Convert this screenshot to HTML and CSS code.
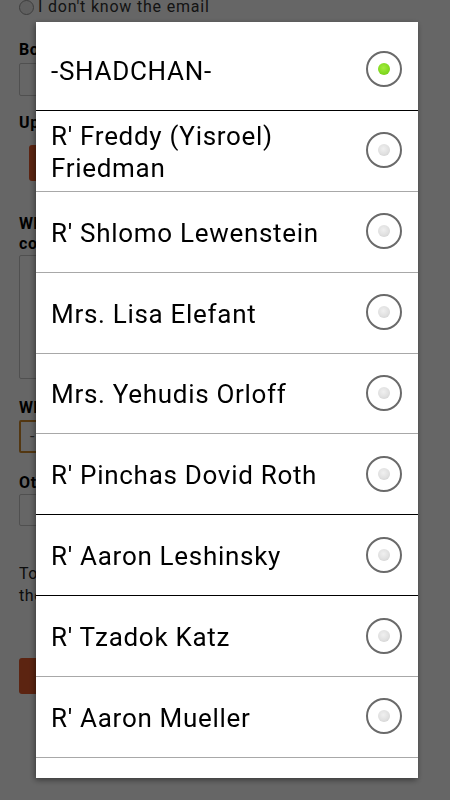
FILE: index.html
```html
<!DOCTYPE html>
<html lang="en">
<head>
<meta charset="utf-8">
<title>Choose shadchan</title>
<link rel="stylesheet" href="styles.css">
</head>
<body>
<div class="page">
  <div class="email-opt"><span class="small-radio"></span><span>I don't know the email</span></div>
  <div class="label lb-boy">Boy's name</div>
  <div class="input in-boy"></div>
  <div class="label lb-up">Upload resume</div>
  <div class="btn btn-up">Choose file</div>
  <div class="label lb-what">What would you like to tell the shadchan about<br>connection</div>
  <div class="textarea"></div>
  <div class="label lb-which">Which shadchan?</div>
  <div class="select">-</div>
  <div class="label lb-other">Other shadchan</div>
  <div class="input in-other"></div>
  <p class="note">To submit this suggestion, tap the button below and<br>the shadchan will be notified.</p>
  <div class="btn btn-submit">Submit</div>
</div>

<div class="overlay"></div>

<div class="dialog">
  <div class="list">
    <div class="row"><span class="name">-SHADCHAN-</span><span class="radio on"><i></i></span></div>
    <div class="row soft"><span class="name">R' Freddy (Yisroel) Friedman</span><span class="radio"><i></i></span></div>
    <div class="row soft"><span class="name">R' Shlomo Lewenstein</span><span class="radio"><i></i></span></div>
    <div class="row soft"><span class="name">Mrs. Lisa Elefant</span><span class="radio"><i></i></span></div>
    <div class="row soft"><span class="name">Mrs. Yehudis Orloff</span><span class="radio"><i></i></span></div>
    <div class="row"><span class="name">R' Pinchas Dovid Roth</span><span class="radio"><i></i></span></div>
    <div class="row"><span class="name">R' Aaron Leshinsky</span><span class="radio"><i></i></span></div>
    <div class="row soft"><span class="name">R' Tzadok Katz</span><span class="radio"><i></i></span></div>
    <div class="row soft"><span class="name">R' Aaron Mueller</span><span class="radio"><i></i></span></div>
    <div class="row soft"><span class="name">R' Other</span><span class="radio"><i></i></span></div>
  </div>
</div>
</body>
</html>
```

FILE: styles.css
```css
html, body {
  margin: 0;
  padding: 0;
  height: 100%;
  overflow: hidden;
  background: #fff;
}

body {
  font-family: Roboto, "Liberation Sans", Arial, sans-serif;
  color: #000;
}

.page {
  padding: 0 19px;
}

.email-opt {
  display: flex;
  align-items: center;
  gap: 4px;
  height: 14px;
  font-size: 16px;
  letter-spacing: 0.8px;
  line-height: 14px;
  color: #333;
  white-space: nowrap;
}

.small-radio {
  width: 13px;
  height: 13px;
  border: 1px solid #999;
  border-radius: 50%;
  background: #eee;
  flex: none;
}

.label {
  font-size: 16px;
  line-height: 20px;
  font-weight: 700;
  letter-spacing: 0.6px;
  white-space: nowrap;
}

.lb-boy { margin-top: 26px; }
.lb-up { margin-top: 17px; }
.lb-what { margin-top: 33px; }
.lb-which { margin-top: 19px; }
.lb-other { margin-top: 20px; }

.input, .textarea, .select {
  box-sizing: border-box;
  border: 1px solid #c8c8c8;
  border-radius: 2px;
  background: #fff;
  width: 370px;
}

.in-boy { margin-top: 3px; height: 33px; }
.in-other { margin-top: 1px; height: 32px; }

.textarea {
  margin-top: 1px;
  height: 124px;
}

.select {
  margin-top: 2px;
  height: 33px;
  border: 2px solid #d08a2c;
  padding-left: 9px;
  font-size: 16px;
  line-height: 29px;
  color: #555;
}

.btn {
  height: 36px;
  width: 140px;
  border-radius: 3px;
  background: #e55a2b;
  color: #fff;
  font-size: 16px;
  line-height: 36px;
  text-align: center;
}

.btn-up {
  margin-top: 12px;
  margin-left: 10px;
}

.note {
  margin: 37px 0 0;
  font-size: 16px;
  line-height: 22px;
  letter-spacing: 0.6px;
  color: #222;
  white-space: nowrap;
}

.btn-submit {
  margin-top: 51px;
  width: 200px;
}

.overlay {
  position: fixed;
  inset: 0;
  background: rgba(0, 0, 0, 0.6);
}

.dialog {
  position: fixed;
  left: 36px;
  top: 22px;
  width: 382px;
  height: 756px;
  box-sizing: border-box;
  padding-top: 8px;
  background: #fff;
  overflow: hidden;
  box-shadow: -1px 2px 6px rgba(0, 0, 0, 0.45);
}

.list {
  display: flex;
  flex-direction: column;
}

.row {
  display: flex;
  align-items: center;
  justify-content: space-between;
  gap: 12px;
  box-sizing: border-box;
  height: 80.875px;
  flex: none;
  padding: 2px 16px 0 15px;
  border-bottom: 1px solid #000;
}

.row.soft {
  border-bottom-color: #a8a8a8;
}

.name {
  font-size: 26px;
  letter-spacing: 0.7px;
  line-height: 32px;
  color: #000;
}

.radio {
  flex: none;
  width: 36px;
  height: 36px;
  margin-top: -3px;
  box-sizing: border-box;
  border: 2px solid #6a6a6a;
  border-radius: 50%;
  display: flex;
  align-items: center;
  justify-content: center;
  background: #fff;
}

.radio i {
  width: 12px;
  height: 12px;
  border-radius: 50%;
  background: radial-gradient(circle at 45% 40%, #f0f0f0 0%, #e0e0e0 55%, #c8c8c8 100%);
}

.radio.on i {
  background: radial-gradient(circle at 45% 40%, #a4ec3e 0%, #86dc24 50%, #6cc414 100%);
}
```
